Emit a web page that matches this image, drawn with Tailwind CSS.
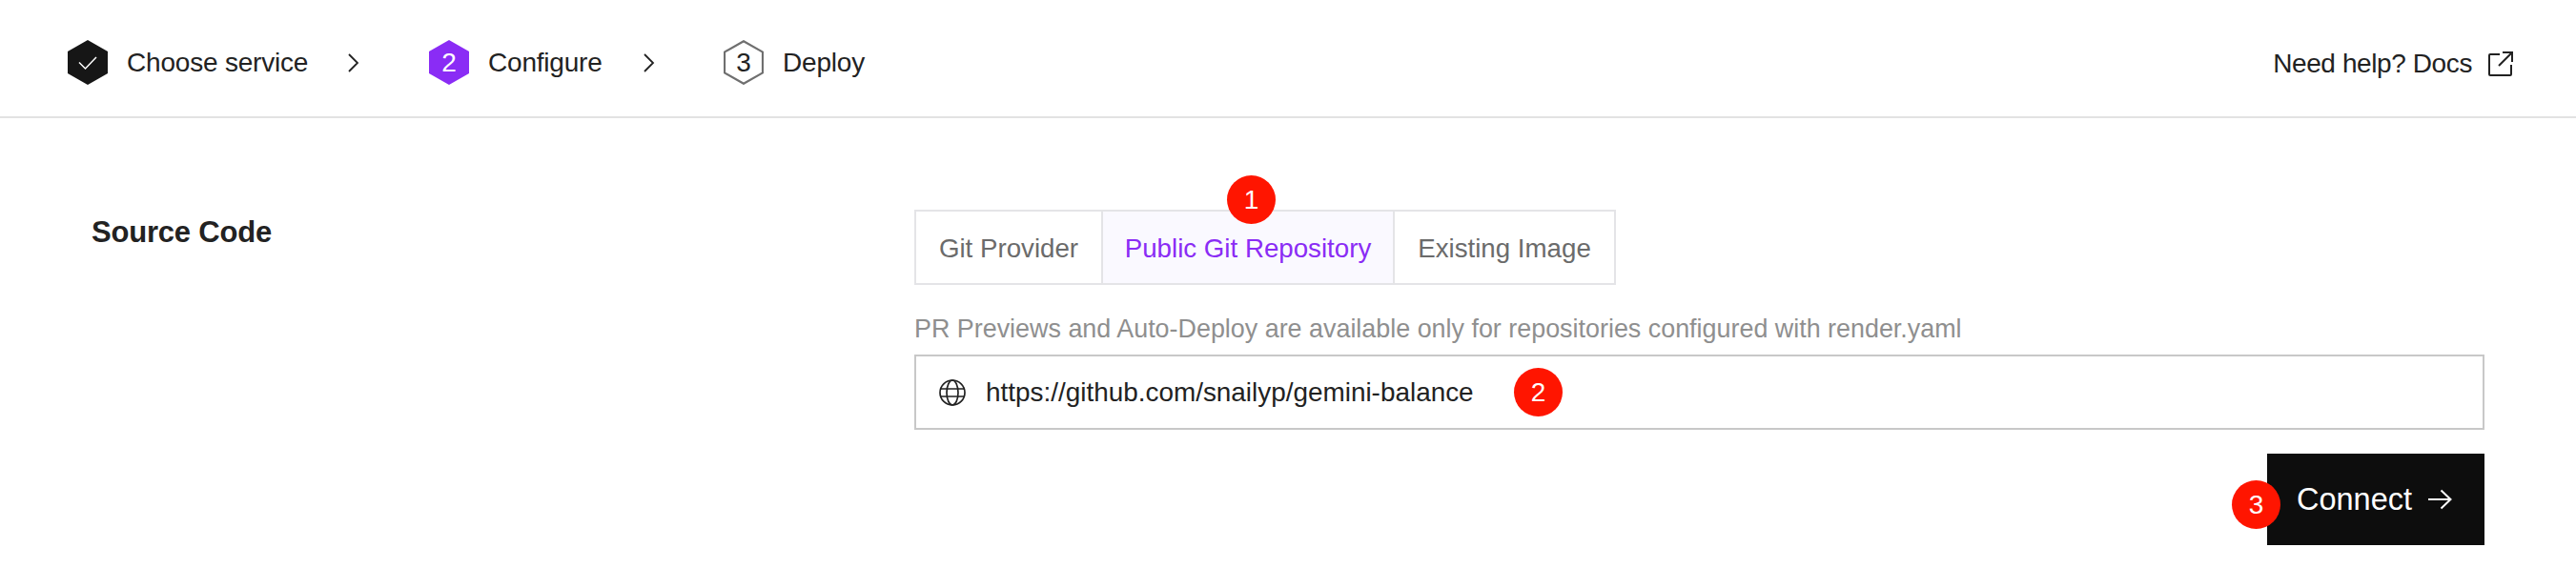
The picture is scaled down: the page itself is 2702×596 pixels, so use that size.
<!DOCTYPE html>
<html lang="en">

<head>
    <meta charset="UTF-8">
    <title>Configure service</title>
    <script src="https://cdn.jsdelivr.net/npm/@tailwindcss/browser@4"></script>
</head>

<body class="bg-white text-[#222222] font-['Liberation_Sans',sans-serif] h-[596px] overflow-hidden">
    <!-- steps -->
    <header class="h-[124px] border-b-2 border-[#e2e2e2] flex items-start justify-between pt-[42px] pl-[71px] pr-[66px]">
        <nav class="flex items-center h-[47px]">
            <svg class="w-[42px] h-[47px]" viewBox="0 0 42 47"><path d="M21 0 42 12v23L21 47 0 35V12z" fill="#161616"/><path d="M12 23.500l6.500 6.500L30 18" fill="none" stroke="#fff" stroke-width="1.5"/></svg>
            <span class="ml-[20px] text-[28px] tracking-[-0.2px] w-[190px] whitespace-nowrap">Choose service</span>
            <svg class="ml-[41px] w-[13px] h-[20px]" viewBox="0 0 13 20"><path d="M2 1 11 10 2 19" fill="none" stroke="#222222" stroke-width="1.8"/></svg>
            <div class="ml-[73px] relative w-[42px] h-[47px] flex items-center justify-center text-white text-[28px]">
                <svg class="absolute inset-0 w-[42px] h-[47px]" viewBox="0 0 42 47"><path d="M21 0 42 12v23L21 47 0 35V12z" fill="#8a2cf5"/></svg>
                <span class="relative">2</span>
            </div>
            <span class="ml-[20px] text-[28px] tracking-[-0.2px] w-[120px] whitespace-nowrap">Configure</span>
            <svg class="ml-[42px] w-[13px] h-[20px]" viewBox="0 0 13 20"><path d="M2 1 11 10 2 19" fill="none" stroke="#222222" stroke-width="1.8"/></svg>
            <div class="ml-[72px] relative w-[42px] h-[47px] flex items-center justify-center text-[28px]">
                <svg class="absolute inset-0 w-[42px] h-[47px]" viewBox="0 0 42 47"><path d="M21 1.200 41 12.600v21.800L21 45.800 1 34.400V12.600z" fill="none" stroke="#6f6f6f" stroke-width="2.200"/></svg>
                <span class="relative">3</span>
            </div>
            <span class="ml-[20px] text-[28px] tracking-[-0.2px] whitespace-nowrap">Deploy</span>
        </nav>
        <a class="flex items-center h-[47px] mt-[1px]">
            <span class="text-[28px] tracking-[-0.4px] whitespace-nowrap">Need help? Docs</span>
            <svg class="ml-[17px] w-[26px] h-[26px]" viewBox="0 0 26 26"><path d="M12 3H2a1 1 0 0 0-1 1v20a1 1 0 0 0 1 1h21a1 1 0 0 0 1-1V14M11 15 25 1M15 1h10v10" fill="none" stroke="#222222" stroke-width="2"/></svg>
        </a>
    </header>

    <main class="flex pl-[96px] pr-[96px]">
        <h2 class="w-[863px] pt-[103px] text-[31px] leading-[34px] font-bold tracking-[-0.2px]">Source Code</h2>
        <section class="flex-1 pt-[96px]">
            <div class="relative inline-flex h-[79px] border-2 border-[#e4e4e7] text-[27.700px] text-[#6b6b6b]">
                <div class="w-[194px] pt-[2px] flex items-center justify-center">Git Provider</div>
                <div class="w-[308px] pt-[2px] flex items-center justify-center bg-[#faf9ff] border-x-2 border-[#e4e4e7] text-[#8a2cf5]">Public Git Repository</div>
                <div class="w-[230px] pt-[2px] flex items-center justify-center">Existing Image</div>
                <span class="absolute left-[326px] top-[-38px] w-[51px] h-[51px] rounded-full bg-[#ff1500] text-white flex items-center justify-center text-[28px]">1</span>
            </div>
            <p class="mt-[31px] text-[26.900px] leading-[30px] text-[#8f8f8f] whitespace-nowrap">PR Previews and Auto-Deploy are available only for repositories configured with render.yaml</p>
            <div class="relative mt-[12px] h-[79px] border-2 border-[#c8c8c8] flex items-center pl-[24px] text-[27.900px]">
                <svg class="w-[28px] h-[28px]" viewBox="0 0 28 28" fill="none" stroke="#222222" stroke-width="1.7"><circle cx="14" cy="14" r="13"/><ellipse cx="14" cy="14" rx="6" ry="13"/><path d="M1 10h26M1 18h26"/></svg>
                <span class="ml-[21px] pt-[1px] whitespace-nowrap">https://github.com/snailyp/gemini-balance</span>
                <span class="absolute left-[627px] top-[12px] w-[51px] h-[51px] rounded-full bg-[#ff1500] text-white flex items-center justify-center text-[28px]">2</span>
            </div>
            <div class="mt-[25px] flex justify-end">
                <button class="relative w-[228px] h-[96px] bg-[#0d0d0d] text-white text-[32.500px] flex items-center pl-[31px]">
                    Connect
                    <svg class="ml-[17px] w-[25px] h-[24px]" viewBox="0 0 25 24" fill="none" stroke="#fff" stroke-width="2"><path d="M0 12h23M13.500 2.500 23.500 12 13.500 21.500"/></svg>
                    <span class="absolute left-[-37px] top-[28px] w-[51px] h-[51px] rounded-full bg-[#ff1500] text-white flex items-center justify-center text-[28px]">3</span>
                </button>
            </div>
        </section>
    </main>
</body>

</html>
